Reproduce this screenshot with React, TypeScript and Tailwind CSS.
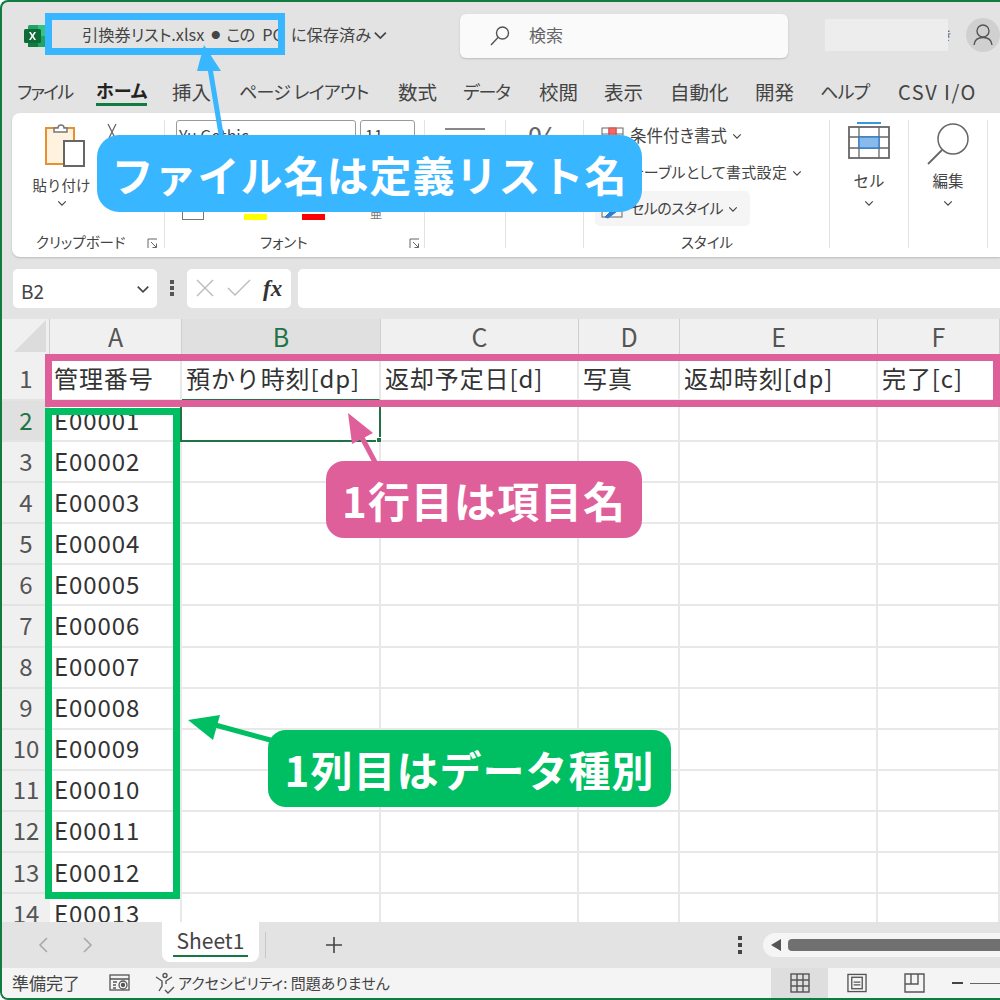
import React from "react";

const Chevron = ({ x = 12, cls = "" }: { x?: number; cls?: string }) => (
  <svg width={x} height={x} viewBox="0 0 12 12" className={cls} fill="none" stroke="#444" strokeWidth="1.4">
    <path d="M1.5 4 L6 8.5 L10.5 4" />
  </svg>
);

const Launcher = () => (
  <svg width="11" height="11" viewBox="0 0 11 11" fill="none" stroke="#666" strokeWidth="1">
    <path d="M1 10V1h9M4 4l5.5 5.500M9.500 5.500v4h-4" />
  </svg>
);

const Sep = () => <div className="w-px h-[128px] bg-[#e3e3e3] shrink-0" />;

const tabs: [string, string, string][] = [
  ["ファイル", "w-[79px]", "text-[18px] tracking-[-1.700px]"],
  ["ホーム", "w-[76px]", "text-[18px]"],
  ["挿入", "w-[67px]", "text-[19.500px]"],
  ["ページ レイアウト", "w-[159px]", "text-[18px] tracking-[-0.700px]"],
  ["数式", "w-[65px]", "text-[19.500px]"],
  ["データ", "w-[76px]", "text-[18px] tracking-[-1.300px]"],
  ["校閲", "w-[65px]", "text-[19.500px]"],
  ["表示", "w-[66px]", "text-[19.500px]"],
  ["自動化", "w-[85px]", "text-[19.500px]"],
  ["開発", "w-[65px]", "text-[19.500px]"],
  ["ヘルプ", "w-[78px]", "text-[18px] tracking-[-0.700px]"],
  ["CSV I/O", "w-[90px]", "text-[20px] tracking-[1.500px]"],
];

const cols = ["A", "B", "C", "D", "E", "F"];
const heads = ["管理番号", "預かり時刻[dp]", "返却予定日[d]", "写真", "返却時刻[dp]", "完了[c]"];
const ids = Array.from({ length: 13 }, (_, i) => "E" + String(i + 1).padStart(5, "0"));

const hd = "flex items-center justify-center text-[25px] border-r border-[#cfcfcf]";
const cell = "flex items-center px-[4px] text-[24px] tracking-[0.900px] text-[#333] border-r-2 border-b-2 border-[#e8e8e8] bg-white whitespace-nowrap overflow-visible";
const rh = "flex items-center justify-center text-[24px] border-b-2 border-[#e3e3e3]";

export default function App() {
  return (
    <div
      className="relative w-[1000px] h-[1000px] overflow-hidden bg-[#e3e3e3] border-t-2 border-l-2 border-b-2 border-[#107c41] rounded-tl-[8px] rounded-bl-[8px] flex flex-col"
      style={{ fontFamily: '"Noto Sans CJK JP", "Noto Sans", sans-serif' }}
    >
      {/* Title bar */}
      <div className="h-[68px] flex items-center shrink-0">
        <div className="ml-[22px] w-[22px] h-[24px] flex items-center justify-center">
          <svg width="22" height="24" viewBox="0 0 22 24">
            <rect x="4" y="1" width="18" height="22" rx="1.500" fill="#21a366" />
            <rect x="14" y="1" width="8" height="11" fill="#33c481" />
            <rect x="4" y="12" width="10" height="11" fill="#107c41" />
            <rect x="0" y="5" width="17" height="14" rx="1.500" fill="#0f6b38" />
            <path d="M5 8l2.500 4L5 16h1.800l1.700-2.700L10.200 16H12l-2.500-4L12 8h-1.800L8.500 10.700 6.800 8z" fill="#fff" />
          </svg>
        </div>
        <div className="ml-[36px] w-[306px] -mt-[3px] flex items-center text-[16.300px] text-[#444] whitespace-nowrap [font-feature-settings:'palt']">
          <span>引換券リスト.xlsx</span>
          <span className="ml-[7px] text-[9px] leading-none">●</span>
          <span className="ml-[6px] tracking-[-1px]">この</span>
          <span className="ml-[8px]">PC</span>
          <span className="ml-[8px]">に保存済み</span>
          <Chevron x={18} cls="ml-[2px]" />
        </div>
        <div className="ml-[72px] w-[329px] h-[44px] bg-[#fafafa] rounded-[6px] shadow-[0_1px_2px_#bbb] flex items-center pl-[29px]">
          <svg width="22" height="22" viewBox="0 0 22 22" fill="none" stroke="#555" strokeWidth="1.400">
            <circle cx="13.500" cy="8" r="6" />
            <path d="M9 12.500 L2 20" />
          </svg>
          <span className="ml-[18px] -mt-[3px] text-[17px] text-[#666]">検索</span>
        </div>
        <div className="ml-[37px] w-[123px] h-[32px] bg-[#ededed] -mt-[2px]" />
        <div className="w-[4px] h-[16px] overflow-hidden flex justify-end items-center text-[12px] leading-none text-[#555] -mt-[2px]">
          <span className="shrink-0">き</span>
        </div>
        <div className="ml-[14px] w-[34px] h-[34px] rounded-full bg-[#d0d0d0] flex items-center justify-center -mt-[2px]">
          <svg width="22" height="24" viewBox="0 0 22 24" fill="none" stroke="#555" strokeWidth="1.400">
            <circle cx="11" cy="8" r="6" />
            <path d="M2 22c.5-5 4-7.500 9-7.500s8.500 2.500 9 7.500" />
          </svg>
        </div>
      </div>

      {/* Tabs */}
      <div className="h-[43px] flex items-center shrink-0 pl-[15px] text-[#444] [font-feature-settings:'palt'] whitespace-nowrap">
        {tabs.map(([t, w, s]) => (
          <div key={t} className={`${w} ${s} shrink-0 relative`}>
            {t === "ホーム" ? (
              <span className="inline-block font-bold text-[#222] border-b-[3px] border-[#107c41] leading-[25px]">{t}</span>
            ) : (
              <span className="leading-[25px]">{t}</span>
            )}
          </div>
        ))}
      </div>

      {/* Ribbon */}
      <div className="ml-[10px] h-[144px] bg-white rounded-l-[8px] shadow-[0_1px_2px_#bbb] flex items-start pt-[7px] shrink-0 text-[#444]">
        {/* clipboard */}
        <div className="w-[152px] h-[128px] flex flex-col shrink-0 relative">
          <div className="flex">
            <div className="w-[85px] flex flex-col items-center pl-[14px]">
              <svg width="42" height="44" viewBox="0 0 42 44" fill="none" className="mt-[3px] ml-[6px]">
                <rect x="2" y="5" width="28" height="36" fill="#fff3e0" stroke="#e8902e" strokeWidth="2" />
                <path d="M10 9V5h4a3 3 0 0 1 6 0h3v4z" fill="#fff" stroke="#777" strokeWidth="1.500" />
                <rect x="20" y="18" width="20" height="25" fill="#fff" stroke="#666" strokeWidth="2" />
              </svg>
              <span className="text-[14.500px] mt-[7px] whitespace-nowrap">貼り付け</span>
              <Chevron x={10} cls="mt-[2px]" />
            </div>
            <div className="ml-[7px] mt-[3px]">
              <svg width="16" height="20" viewBox="0 0 16 20" fill="none" stroke="#666" strokeWidth="1.300">
                <path d="M4 1l7 14M12 1L5 15" />
              </svg>
              <svg width="22" height="22" viewBox="0 0 22 22" className="mt-[42px] -ml-[3px]">
                <path d="M2 6l9 9 9-9-9 14z" fill="#f4a460" stroke="#e8902e" />
              </svg>
            </div>
          </div>
          <div className="absolute left-[24px] -bottom-[5px] text-[14.500px] whitespace-nowrap [font-feature-settings:'palt']">クリップボード</div>
          <div className="absolute left-[135px] -bottom-[1px]"><Launcher /></div>
        </div>
        <Sep />
        {/* font */}
        <div className="w-[259px] h-[128px] shrink-0 relative">
          <div className="flex gap-[4px] pl-[11px]">
            <div className="w-[180px] h-[30px] border border-[#9a9a9a] rounded-[3px] text-[16px] pl-[2px] flex items-center">Yu Gothic</div>
            <div className="w-[55px] h-[30px] border border-[#9a9a9a] rounded-[3px] text-[16px] pl-[4px] flex items-center">11</div>
          </div>
          <div className="flex items-end pl-[17px] mt-[44px] h-[26px]">
            <div className="w-[22px] h-[14px] border border-[#777]" />
            <div className="ml-[40px] w-[23px] h-[6px] bg-[#ffff00]" />
            <div className="ml-[35px] w-[23px] h-[6px] bg-[#ff0000]" />
            <span className="ml-[45px] text-[12px] text-[#777] leading-none">亜</span>
          </div>
          <div className="absolute left-[95px] -bottom-[5px] text-[14.500px] whitespace-nowrap [font-feature-settings:'palt']">フォント</div>
          <div className="absolute left-[244px] -bottom-[1px]"><Launcher /></div>
        </div>
        <Sep />
        {/* alignment */}
        <div className="w-[80px] h-[128px] shrink-0 pl-[20px] pt-[8px]">
          <div className="w-[40px] h-[2px] bg-[#888]" />
          <div className="w-[40px] h-[2px] bg-[#888] mt-[6px]" />
        </div>
        <Sep />
        {/* number */}
        <div className="w-[77px] h-[128px] shrink-0 pl-[22px] text-[34px] leading-[36px] text-[#666]">%</div>
        <Sep />
        {/* styles */}
        <div className="w-[245px] h-[128px] shrink-0 relative pl-[11px] text-[15px] [font-feature-settings:'palt'] whitespace-nowrap">
          <div className="h-[37px] -mt-[3px] flex items-center pl-[6px]">
            <svg width="23" height="22" viewBox="0 0 23 22" fill="none" stroke="#666">
              <rect x="1" y="3" width="21" height="17" />
              <path d="M1 9h21M1 15h21M8 3v17M15 3v17" />
              <rect x="8" y="3" width="7" height="6" fill="#f06a6a" stroke="#e44" />
            </svg>
            <span className="ml-[6px] text-[16.500px]">条件付き書式</span>
            <Chevron x={10} cls="ml-[5px]" />
          </div>
          <div className="h-[37px] flex items-center pl-[35px]">
            <span className="tracking-[0.300px]">テーブルとして書式設定</span>
            <Chevron x={10} cls="ml-[5px]" />
          </div>
          <div className="h-[35px] w-[155px] rounded-[5px] bg-[#f5f5f5] flex items-center pl-[6px]">
            <svg width="23" height="20" viewBox="0 0 23 20" fill="none" stroke="#666">
              <rect x="1" y="2" width="20" height="16" />
              <path d="M4 18l8-8 3 3-8 6z" fill="#2b7cd3" stroke="#2b7cd3" />
            </svg>
            <span className="ml-[6px] tracking-[-0.500px]">セルのスタイル</span>
            <Chevron x={10} cls="ml-[5px]" />
          </div>
          <div className="absolute left-[97px] -bottom-[5px] text-[14.500px] [font-feature-settings:'palt']">スタイル</div>
        </div>
        <Sep />
        {/* cells */}
        <div className="w-[78px] h-[128px] shrink-0 flex flex-col items-center text-[15.500px]">
          <svg width="42" height="38" viewBox="0 0 42 38" fill="none" stroke="#666" strokeWidth="1.300" className="mt-[1px]">
            <path d="M9 2h24" stroke="#3a96dd" strokeWidth="2" />
            <rect x="1" y="6" width="40" height="31" strokeWidth="1.800" />
            <path d="M1 16h40M1 27h40M11 6v31M31 6v31" />
            <rect x="11" y="16" width="20" height="11" fill="#88bbea" stroke="#2b7cd3" />
          </svg>
          <span className="mt-[10px]">セル</span>
          <Chevron x={10} cls="mt-[6px]" />
        </div>
        <Sep />
        {/* edit */}
        <div className="w-[78px] h-[128px] shrink-0 flex flex-col items-center text-[15.500px]">
          <svg width="44" height="44" viewBox="0 0 44 44" fill="none" stroke="#666" strokeWidth="1.500" className="mt-[2px]">
            <circle cx="27" cy="17" r="15" />
            <path d="M16 28 L2 42" strokeWidth="1.800" />
          </svg>
          <span className="mt-[3px]">編集</span>
          <Chevron x={10} cls="mt-[6px]" />
        </div>
        <Sep />
      </div>

      {/* Formula bar */}
      <div className="h-[40px] mt-[11px] flex items-center shrink-0">
        <div className="ml-[11px] w-[144px] h-[39px] bg-white rounded-[5px] flex items-center justify-between pl-[8px] pr-[7px] text-[19px] text-[#444]">
          <span className="mt-[6px]">B2</span>
          <Chevron x={14} cls="mt-[2px]" />
        </div>
        <div className="w-[30px] flex flex-col items-center gap-[2px]">
          <div className="w-[4px] h-[4px] bg-[#555]" />
          <div className="w-[4px] h-[4px] bg-[#555]" />
          <div className="w-[4px] h-[4px] bg-[#555]" />
        </div>
        <div className="w-[104px] h-[39px] bg-white rounded-[5px] flex items-center pl-[9px]">
          <svg width="18" height="18" viewBox="0 0 18 18" fill="none" stroke="#bbb" strokeWidth="1.400">
            <path d="M1 1l16 16M17 1L1 17" />
          </svg>
          <svg width="24" height="18" viewBox="0 0 24 18" fill="none" stroke="#bbb" strokeWidth="1.400" className="ml-[13px]">
            <path d="M1 9l7 7L23 1" />
          </svg>
          <span className="ml-[12px] text-[23px] font-bold italic text-[#333] leading-none" style={{ fontFamily: '"Liberation Serif", serif' }}>fx</span>
        </div>
        <div className="ml-[7px] flex-1 h-[39px] bg-white rounded-l-[5px]" />
      </div>

      {/* Sheet */}
      <div className="mt-[11px] flex-1 overflow-hidden bg-white min-h-0">
        <div className="grid grid-cols-[48px_132px_199px_198px_101px_198px_122px] grid-rows-[36px_46px] auto-rows-[41.100px]" style={{ width: 998 }}>
          <div className="bg-[#f0f0f0] border-r border-[#cfcfcf] relative flex items-end justify-end pr-[3px] pb-[3px]">
            <svg width="32" height="32" viewBox="0 0 32 32"><path d="M32 0V32H0z" fill="#dcdcdc" /></svg>
          </div>
          {cols.map((c) => (
            <div key={c} className={hd + (c === "B" ? " bg-[#e0e0e0] text-[#217346]" : " bg-[#f0f0f0] text-[#555]")}>{c}</div>
          ))}
          <div className={rh + " pt-[2px] bg-[#f0f0f0] text-[#555]"}>1</div>
          {heads.map((h, i) => (
            <div key={h} className={cell + " pt-[2px]" + (i === 1 ? " border-b-[#217346]" : "")}>{h}</div>
          ))}
          {ids.map((id, r) => (
            <React.Fragment key={id}>
              <div className={rh + " pb-[2px]" + (r === 0 ? " text-[#217346] bg-[#e0e0e0]" : " text-[#555] bg-[#f0f0f0]")}>{r + 2}</div>
              <div className={cell + " pb-[2px]"}>{id}</div>
              {[0, 1, 2, 3, 4].map((c) => (
                <div key={c} className={cell + " relative"}>
                  {r === 0 && c === 0 && (
                    <div className="absolute -left-[2px] -top-[1px] w-[201px] h-[42px] border-2 border-[#217346]">
                      <div className="absolute -right-[4px] -bottom-[4px] w-[7px] h-[7px] bg-[#217346] border border-white" />
                    </div>
                  )}
                </div>
              ))}
            </React.Fragment>
          ))}
        </div>
      </div>

      {/* Sheet tabs */}
      <div className="h-[46px] flex items-center shrink-0 bg-[#e3e3e3] text-[#444]">
        <svg width="12" height="18" viewBox="0 0 12 18" fill="none" stroke="#a8a8a8" strokeWidth="1.600" className="ml-[35px]"><path d="M10 2L3 9l7 7" /></svg>
        <svg width="12" height="18" viewBox="0 0 12 18" fill="none" stroke="#a8a8a8" strokeWidth="1.600" className="ml-[33px]"><path d="M2 2l7 7-7 7" /></svg>
        <div className="ml-[68px] w-[97px] h-[40px] -mt-[6px] bg-white rounded-b-[8px] flex flex-col items-center pt-[5px]">
          <span className="text-[21px] leading-[26px]">Sheet1</span>
          <div className="w-[75px] h-[2px] bg-[#107c41] mt-[2px]" />
        </div>
        <div className="ml-[6px] w-px h-[26px] bg-[#c8c8c8]" />
        <svg width="18" height="18" viewBox="0 0 18 18" stroke="#444" strokeWidth="1.600" className="ml-[59px]"><path d="M9 1v16M1 9h16" /></svg>
        <div className="ml-[395px] flex flex-col gap-[3px] items-center">
          <div className="w-[4px] h-[4px] bg-[#444]" />
          <div className="w-[4px] h-[4px] bg-[#444]" />
          <div className="w-[4px] h-[4px] bg-[#444]" />
        </div>
        <div className="ml-[21px] flex-1 h-[24px] bg-[#f5f5f5] rounded-l-[12px] flex items-center pl-[8px]">
          <svg width="10" height="12" viewBox="0 0 10 12"><path d="M10 0v12L0 6z" fill="#555" /></svg>
          <div className="ml-[7px] flex-1 h-[12px] bg-[#707070] rounded-l-[4px]" />
        </div>
      </div>

      {/* Status bar */}
      <div className="h-[30px] flex items-center shrink-0 bg-[#f4f4f4] text-[15px] text-[#444] whitespace-nowrap [font-feature-settings:'palt']">
        <span className="ml-[10px] w-[97px] text-[17px]">準備完了</span>
        <svg width="22" height="20" viewBox="0 0 22 20" fill="none" stroke="#555" strokeWidth="1.300">
          <rect x="1" y="2" width="19" height="15" />
          <path d="M1 6h19" />
          <circle cx="14" cy="12" r="4" />
          <circle cx="14" cy="12" r="1.500" fill="#555" />
          <path d="M4 9h4M4 12h3M4 15h3" />
        </svg>
        <svg width="22" height="22" viewBox="0 0 22 22" fill="none" stroke="#555" strokeWidth="1.400" className="ml-[23px]">
          <circle cx="11" cy="3.500" r="2" />
          <path d="M2 5l6 4v5l-3 5M18 5l-6 4v3M11 18l3 3 6-6" />
        </svg>
        <span className="ml-[2px] w-[595px]">アクセシビリティ: 問題ありません</span>
        <div className="-ml-[2px] w-[57px] h-[30px] bg-[#dedede] flex items-center justify-center">
          <svg width="20" height="20" viewBox="0 0 20 20" fill="none" stroke="#555" strokeWidth="1.400">
            <rect x="1" y="1" width="18" height="18" />
            <path d="M7 1v18M13 1v18M1 7h18M1 13h18" />
          </svg>
        </div>
        <div className="ml-[19px] w-[20px] flex items-center justify-center">
          <svg width="21" height="20" viewBox="0 0 21 20" fill="none" stroke="#555" strokeWidth="1.400">
            <rect x="1" y="1" width="19" height="18" />
            <rect x="5" y="4" width="11" height="12" />
            <path d="M7 9h7M7 12h7" />
          </svg>
        </div>
        <svg width="21" height="20" viewBox="0 0 21 20" fill="none" stroke="#555" strokeWidth="1.400" className="ml-[37px]">
          <path d="M1 1h19v18H1zM1 11h13V1M7 1v10" />
        </svg>
        <div className="ml-[27px] w-[11px] h-[2px] bg-[#444]" />
        <div className="ml-[7px] flex-1 h-px bg-[#666]" />
      </div>

      {/* Annotation overlays */}
      <div className="absolute left-[43px] top-[11px] w-[240px] h-[42px] border-[7px] border-[#38b6ff]" />
      <div className="absolute left-[43px] top-[352px] w-[955px] h-[53px] border-[7px] border-[#df5f9b]" />
      <div className="absolute left-[43px] top-[406px] w-[135px] h-[491px] border-[7px] border-[#00bf63]" />
      <svg className="absolute left-0 top-0 pointer-events-none" width="1000" height="1000" viewBox="0 0 1000 1000" style={{ marginLeft: -2, marginTop: -2 }}>
        <path d="M222 140 L209 62" stroke="#38b6ff" strokeWidth="5" />
        <path d="M204 45 L221 71 L197 71 z" fill="#38b6ff" />
        <path d="M376 464 L359 432" stroke="#df5f9b" strokeWidth="5" />
        <path d="M348 413 L373 433 L352 444 z" fill="#df5f9b" />
        <path d="M274 741 L208 723" stroke="#00bf63" strokeWidth="5" />
        <path d="M188 720 L220 715 L213 740 z" fill="#00bf63" />
      </svg>
      <div className="absolute left-[95px] top-[133px] w-[545px] h-[77px] rounded-[22px] bg-[#38b6ff] flex items-center justify-center text-[42px] tracking-[1px] font-bold text-white whitespace-nowrap">ファイル名は定義リスト名</div>
      <div className="absolute left-[324px] top-[459px] w-[316px] h-[77px] rounded-[18px] bg-[#df5f9b] flex items-center justify-center text-[42px] tracking-[1px] font-bold text-white whitespace-nowrap">1行目は項目名</div>
      <div className="absolute left-[266px] top-[728px] w-[403px] h-[77px] rounded-[18px] bg-[#00bf63] flex items-center justify-center text-[42px] tracking-[1px] font-bold text-white whitespace-nowrap">1列目はデータ種別</div>
    </div>
  );
}
